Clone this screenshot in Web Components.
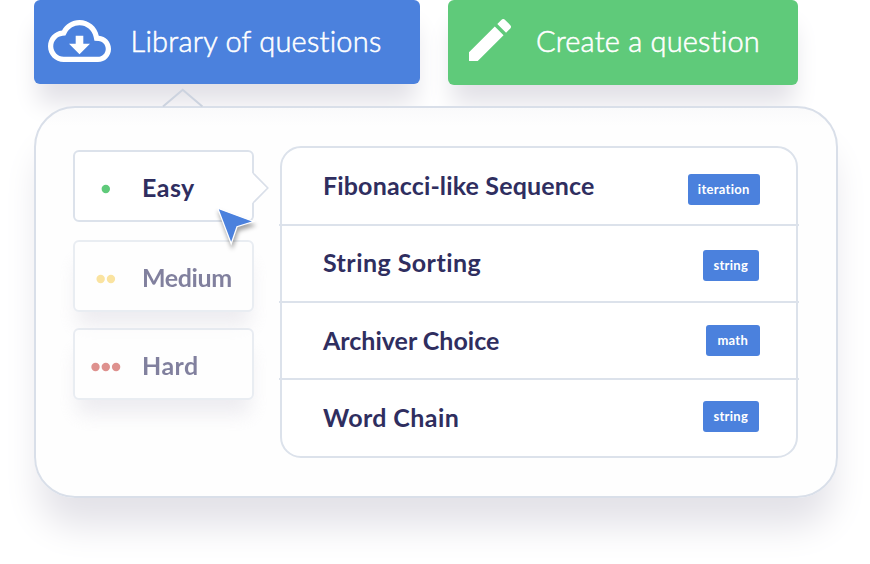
<!DOCTYPE html>
<html lang="en">
<head>
<meta charset="utf-8">
<title>Questions</title>
<style>
  body {
    margin: 0;
    background: #fff;
    color: #2f2e5f;
    font-family: Lato, "Open Sans", sans-serif;
    font-variant-ligatures: none;
    overflow: hidden;
  }
</style>
</head>
<body>
<question-browser></question-browser>

<template id="question-browser-template">
  <style>
    :host {
      display: block;
      position: relative;
      width: 870px;
      height: 564px;
      overflow: hidden;
      --line: #d9dfe9;
      --soft-line: #dce2eb;
    }
    header {
      display: flex;
      align-items: flex-start;
      gap: 28px;
      padding-left: 34px;
      height: 106px;
      box-sizing: border-box;
    }
    action-button { height: 84px; }
    .library { width: 386px; --fill: #4b81dd; --indent: 14px; --track: 0.23px; }
    .create { width: 350px; height: 84.5px; --fill: #5fca7a; --indent: 21px; --track: 0.2px; }
    .library svg { width: 63px; height: 42px; margin: 0 19.5px 2px 0; }
    .create svg { width: 42px; height: 42px; margin: 0 25px 4px 0; }
    .caret {
      position: absolute;
      left: 162px;
      top: 88px;
      width: 42px;
      height: 19px;
    }
    .cursor {
      position: absolute;
      left: 212px;
      top: 202px;
      width: 48px;
      height: 50px;
      overflow: visible;
      filter: drop-shadow(1px 4px 2px rgba(0, 0, 0, 0.35));
    }
    main {
      position: relative;
      display: flex;
      align-items: flex-start;
      box-sizing: border-box;
      width: 804px;
      height: 392px;
      margin-left: 34px;
      padding: 38px 0 0 37px;
      border: 2px solid var(--line);
      border-radius: 41px;
      background: linear-gradient(#fafafb, #fefefe 18px);
      box-shadow: 0 34px 36px -6px #e3e2e8;
    }
    nav {
      display: flex;
      flex-direction: column;
      gap: 17px;
      width: 181px;
      padding-top: 4px;
      margin-right: 26px;
    }
    question-list { width: 518px; }
  </style>
  <header>
    <action-button class="library">
      <svg slot="icon" viewBox="0 4 24 16" fill="#fff">
        <path d="M19.35 10.04C18.67 6.59 15.64 4 12 4 9.11 4 6.6 5.64 5.35 8.04 2.34 8.36 0 10.91 0 14c0 3.31 2.69 6 6 6h13c2.76 0 5-2.24 5-5 0-2.64-2.05-4.78-4.65-4.96zM19 18H6c-2.21 0-4-1.79-4-4 0-2.05 1.53-3.76 3.56-3.97l1.07-.11.5-.95C8.08 7.14 9.94 6 12 6c2.62 0 4.88 1.86 5.39 4.43l.3 1.5 1.53.11c1.56.1 2.78 1.41 2.78 2.96 0 1.65-1.35 3-3 3z"/>
        <path d="M13.45 10h-2.9v3H8l4 4 4-4h-2.55z"/>
      </svg>
      Library of questions
    </action-button>
    <action-button class="create">
      <svg slot="icon" viewBox="3 3 18 18" fill="#fff">
        <path d="M3 17.25V21h3.75L17.81 9.94l-3.75-3.75L3 17.25zM20.71 7.04c.39-.39.39-1.02 0-1.41l-2.34-2.34c-.39-.39-1.02-.39-1.41 0l-1.83 1.83 3.75 3.75 1.83-1.83z"/>
      </svg>
      Create a question
    </action-button>
  </header>
  <main>
    <nav>
      <level-card dots="1" selected style="--dot: #5fca7a; --track: 0.45px">Easy</level-card>
      <level-card dots="2" style="--dot: #f8d263; --track: -0.4px; margin-top: 1px">Medium</level-card>
      <level-card dots="3" style="--dot: #c94a45; --track: 0.45px; margin-top: -1px">Hard</level-card>
    </nav>
    <question-list>
      <question-row tag="iteration" style="--track: 0.15px; --right: 38px; --tag-y: 4px; --tag-w: 72.5px">Fibonacci-like Sequence</question-row>
      <question-row tag="string" style="--track: 0.45px; --right: 39px; --tag-y: 3px; --tag-w: 56.5px">String Sorting</question-row>
      <question-row tag="math" style="--track: 0; --right: 38px; --tag-y: 1px; --tag-w: 54.5px">Archiver Choice</question-row>
      <question-row tag="string" style="--track: 0.4px; --right: 39px; --tag-y: -0.5px; --tag-w: 56.5px">Word Chain</question-row>
    </question-list>
  </main>
  <svg class="caret" viewBox="0 0 42 19" fill="none" stroke="#ccd3df" stroke-width="2">
    <path d="M1 18.5 20.7 1.8 40.4 18.5"/>
  </svg>
  <svg class="cursor" viewBox="0 0 48 50">
    <path d="M5.7 6.2 41.6 19.5 25 24.7 19.2 41.8z" fill="#4b81dd" stroke="#fff" stroke-width="1.3"/>
  </svg>
</template>

<template id="action-button-template">
  <style>
    :host {
      display: flex;
      align-items: center;
      box-sizing: border-box;
      padding-left: var(--indent);
      border-radius: 6px;
      background: var(--fill);
      box-shadow: 0 23px 24px -4px #e2e1e7;
      color: #fff;
      font-size: 29px;
      font-weight: 300;
      letter-spacing: var(--track);
      white-space: nowrap;
    }
    ::slotted(svg) { flex: none; display: block; }
    span { padding-bottom: 4px; -webkit-text-stroke: 0.55px #fff; }
  </style>
  <slot name="icon"></slot>
  <span><slot></slot></span>
</template>

<template id="level-card-template">
  <style>
    :host {
      display: flex;
      align-items: center;
      position: relative;
      box-sizing: border-box;
      height: 72px;
      padding-top: 2px;
      border: 2px solid var(--soft-line);
      border-radius: 6px;
      background: #fff;
      box-shadow: 0 18px 20px -4px #e2e0e7;
      font-size: 25px;
      font-weight: 700;
      letter-spacing: var(--track);
      opacity: 0.6;
    }
    :host([selected]) { opacity: 1; box-shadow: none; }
    .dots {
      display: block;
      flex: none;
      width: 62px;
      height: 10px;
      margin: 3px 5px 0 0;
      fill: var(--dot);
    }
    /* pointer towards the list, only on the selected card */
    .pointer { display: none; position: absolute; left: 177px; top: 19px; width: 18px; height: 34px; }
    :host([selected]) .pointer { display: block; }
  </style>
  <svg class="dots" viewBox="0 0 62 10"></svg>
  <slot></slot>
  <svg class="pointer" viewBox="0 0 18 34">
    <path d="M0 2H2V32H0z" fill="#fff"/>
    <path d="M1 2 15.8 17 1 32" fill="#fff" stroke="#d9dfe9" stroke-width="1.6"/>
  </svg>
</template>

<template id="question-list-template">
  <style>
    :host {
      display: block;
      box-sizing: border-box;
      height: 312px;
      border: 2px solid var(--soft-line);
      border-radius: 21px;
      background: #fff;
    }
  </style>
  <slot></slot>
</template>

<template id="question-row-template">
  <style>
    :host {
      display: flex;
      align-items: center;
      justify-content: space-between;
      box-sizing: border-box;
      height: 77.4px;
      margin: 0 -3px;
      padding: 0 calc(var(--right) + 1px) 2px 44px;
      border-bottom: 2px solid var(--soft-line);
      font-size: 25px;
      font-weight: 700;
      letter-spacing: var(--track);
    }
    :host(:first-child) { height: 77.6px; padding-bottom: 1px; }
    :host(:last-child) { border-color: transparent; }
    .tag {
      position: relative;
      top: var(--tag-y);
      width: var(--tag-w);
      border-radius: 3px;
      background: #4b81dd;
      color: #fff;
      font-size: 13px;
      line-height: 30.5px;
      letter-spacing: 0.28px;
      text-align: center;
    }
  </style>
  <slot></slot>
  <div class="tag"></div>
</template>

<script>
  class TemplateElement extends HTMLElement {
    constructor() {
      super();
      const template = document.getElementById(`${this.localName}-template`);
      this.attachShadow({ mode: "open" });
      this.shadowRoot.appendChild(template.content.cloneNode(true));
    }
  }

  customElements.define("action-button", class extends TemplateElement {});
  customElements.define("question-list", class extends TemplateElement {});

  customElements.define(
    "level-card",
    class extends TemplateElement {
      connectedCallback() {
        const count = Number(this.getAttribute("dots"));
        const step = 10.3;
        let circles = "";
        for (let i = 0; i < count; i++) {
          const x = 30.8 + (i - (count - 1) / 2) * step;
          circles += `<circle cx="${x}" cy="5" r="4.2"/>`;
        }
        this.shadowRoot.querySelector(".dots").innerHTML = circles;
      }
    }
  );

  customElements.define(
    "question-row",
    class extends TemplateElement {
      connectedCallback() {
        this.shadowRoot.querySelector(".tag").textContent = this.getAttribute("tag");
      }
    }
  );

  customElements.define("question-browser", class extends TemplateElement {});
</script>
</body>
</html>
